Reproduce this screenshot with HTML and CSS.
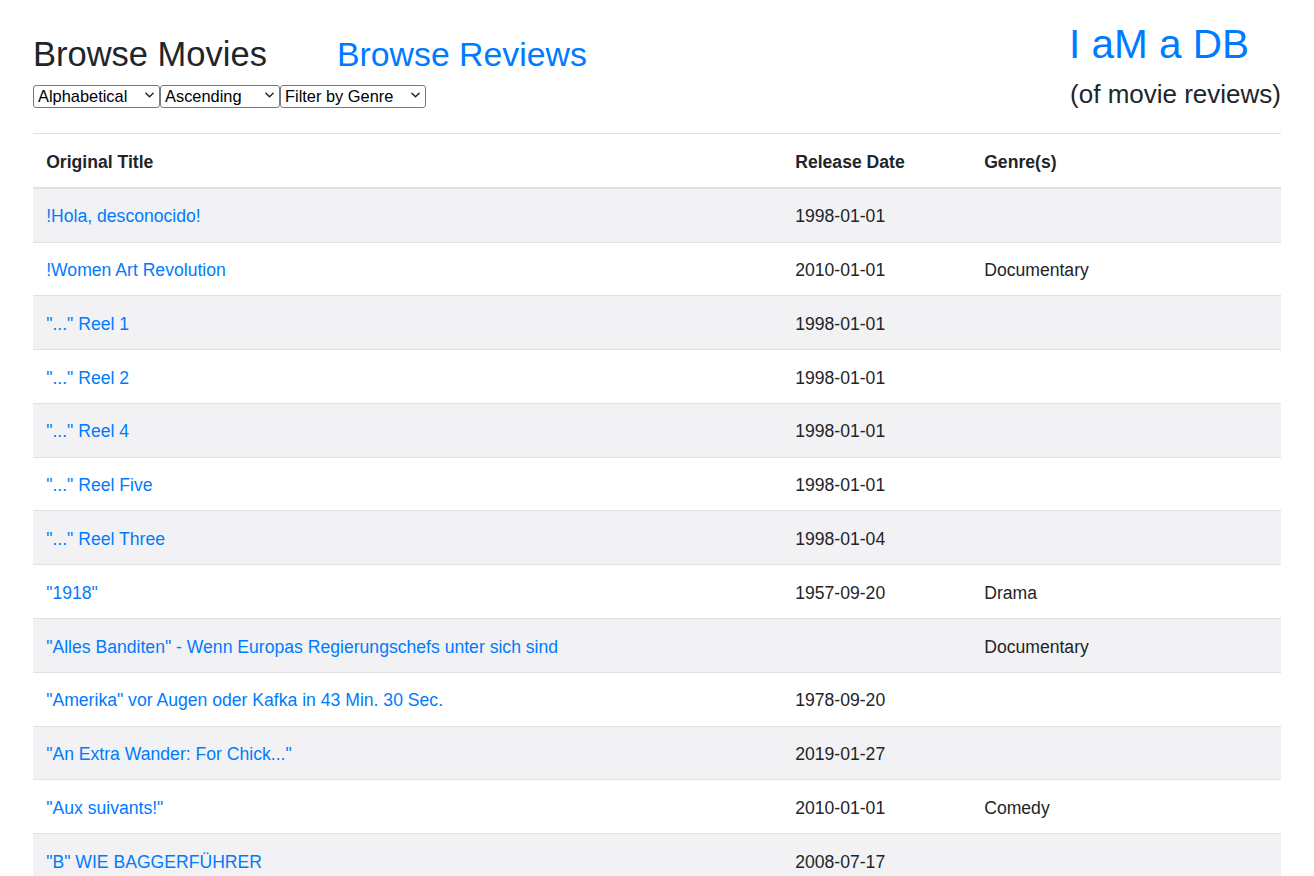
FILE: index.html
```html
<!DOCTYPE html>
<html lang="en">
<head>
<meta charset="utf-8">
<title>Browse Movies</title>
<link rel="stylesheet" href="styles.css">
</head>
<body>
<div class="page">
  <header class="top">
    <div class="left">
      <div class="titles">
        <h2 class="title">Browse Movies</h2>
        <h2 class="title title-link"><a href="#" class="link">Browse Reviews</a></h2>
      </div>
      <div class="controls">
        <span class="sel w1"><select><option>Alphabetical</option></select><svg class="chev" viewBox="0 0 10 6" width="9" height="6"><path d="M1 1l4 4 4-4" fill="none" stroke="#222" stroke-width="1.6" stroke-linecap="round" stroke-linejoin="round"/></svg></span><span class="sel w2"><select><option>Ascending</option></select><svg class="chev" viewBox="0 0 10 6" width="9" height="6"><path d="M1 1l4 4 4-4" fill="none" stroke="#222" stroke-width="1.6" stroke-linecap="round" stroke-linejoin="round"/></svg></span><span class="sel w3"><select><option>Filter by Genre</option></select><svg class="chev" viewBox="0 0 10 6" width="9" height="6"><path d="M1 1l4 4 4-4" fill="none" stroke="#222" stroke-width="1.6" stroke-linecap="round" stroke-linejoin="round"/></svg></span>
      </div>
    </div>
    <div class="brand">
      <h1 class="brand-name"><a href="#" class="link">I aM a DB</a></h1>
      <h4 class="brand-sub">(of movie reviews)</h4>
    </div>
  </header>

  <table class="movies">
    <colgroup>
      <col class="c-title">
      <col class="c-date">
      <col class="c-genre">
    </colgroup>
    <thead>
      <tr><th>Original Title</th><th>Release Date</th><th>Genre(s)</th></tr>
    </thead>
    <tbody>
      <tr><td><a href="#" class="link">!Hola, desconocido!</a></td><td>1998-01-01</td><td></td></tr>
      <tr><td><a href="#" class="link">!Women Art Revolution</a></td><td>2010-01-01</td><td>Documentary</td></tr>
      <tr><td><a href="#" class="link">"..." Reel 1</a></td><td>1998-01-01</td><td></td></tr>
      <tr><td><a href="#" class="link">"..." Reel 2</a></td><td>1998-01-01</td><td></td></tr>
      <tr><td><a href="#" class="link">"..." Reel 4</a></td><td>1998-01-01</td><td></td></tr>
      <tr><td><a href="#" class="link">"..." Reel Five</a></td><td>1998-01-01</td><td></td></tr>
      <tr><td><a href="#" class="link">"..." Reel Three</a></td><td>1998-01-04</td><td></td></tr>
      <tr><td><a href="#" class="link">"1918"</a></td><td>1957-09-20</td><td>Drama</td></tr>
      <tr><td><a href="#" class="link">"Alles Banditen" - Wenn Europas Regierungschefs unter sich sind</a></td><td></td><td>Documentary</td></tr>
      <tr><td><a href="#" class="link">"Amerika" vor Augen oder Kafka in 43 Min. 30 Sec.</a></td><td>1978-09-20</td><td></td></tr>
      <tr><td><a href="#" class="link">"An Extra Wander: For Chick..."</a></td><td>2019-01-27</td><td></td></tr>
      <tr><td><a href="#" class="link">"Aux suivants!"</a></td><td>2010-01-01</td><td>Comedy</td></tr>
      <tr><td><a href="#" class="link">"B" WIE BAGGERFÜHRER</a></td><td>2008-07-17</td><td></td></tr>
    </tbody>
  </table>
</div>
</body>
</html>
```

FILE: styles.css
```css
* { box-sizing: border-box; }

html, body {
  margin: 0;
  background: #ffffff;
}

body {
  font-family: "Liberation Sans", Arial, sans-serif;
  font-size: 17.6px;
  line-height: 1.5;
  color: #212529;
}

.page {
  padding: 20px 33px 0 33px;
}

.link {
  color: #007bff;
  text-decoration: none;
}

.top {
  display: flex;
  justify-content: space-between;
  align-items: flex-start;
}

.titles {
  display: flex;
  align-items: baseline;
  margin-top: 14px;
}

.title {
  margin: 0;
  font-size: 34.5px;
  font-weight: 400;
  line-height: 1.2;
}

.titles .title:first-child {
  width: 304px;
}

.title-link {
  font-size: 33.8px;
}

.controls {
  display: flex;
  margin-top: 7.6px;
}

.sel {
  position: relative;
  display: block;
  height: 23px;
}

.sel.w1 { width: 127px; }
.sel.w2 { width: 120px; }
.sel.w3 { width: 146px; }

.sel select {
  appearance: none;
  -webkit-appearance: none;
  width: 100%;
  height: 100%;
  margin: 0;
  padding: 0 0 0 4px;
  border: 1px solid #7a7a7a;
  border-radius: 3px;
  background: #ffffff;
  color: #000000;
  font-family: "Liberation Sans", Arial, sans-serif;
  font-size: 16.4px;
  line-height: 21px;
}

.chev {
  position: absolute;
  right: 6px;
  top: 9px;
  pointer-events: none;
}

.brand {
  display: flex;
  flex-direction: column;
}

.brand-name {
  margin: 0;
  font-size: 40.5px;
  font-weight: 400;
  line-height: 1.2;
}

.brand-sub {
  margin: 10.4px 0 0 1px;
  font-size: 26px;
  font-weight: 400;
  line-height: 1.2;
}

.movies {
  width: 100%;
  margin-top: 22.8px;
  border-collapse: collapse;
  table-layout: fixed;
}

.c-title { width: 749px; }
.c-date { width: 189px; }
.c-genre { width: 310px; }

.movies th,
.movies td {
  padding: 14.6px 13.2px 11.8px 13.2px;
  text-align: left;
  vertical-align: top;
  border-top: 1px solid #dee2e6;
  white-space: nowrap;
  overflow: hidden;
}

.movies th {
  font-weight: 700;
  border-bottom: 2px solid #dee2e6;
}

.movies tbody tr:nth-child(odd) {
  background: #f2f2f4;
}

.movies thead tr {
  background: #ffffff;
}
```
